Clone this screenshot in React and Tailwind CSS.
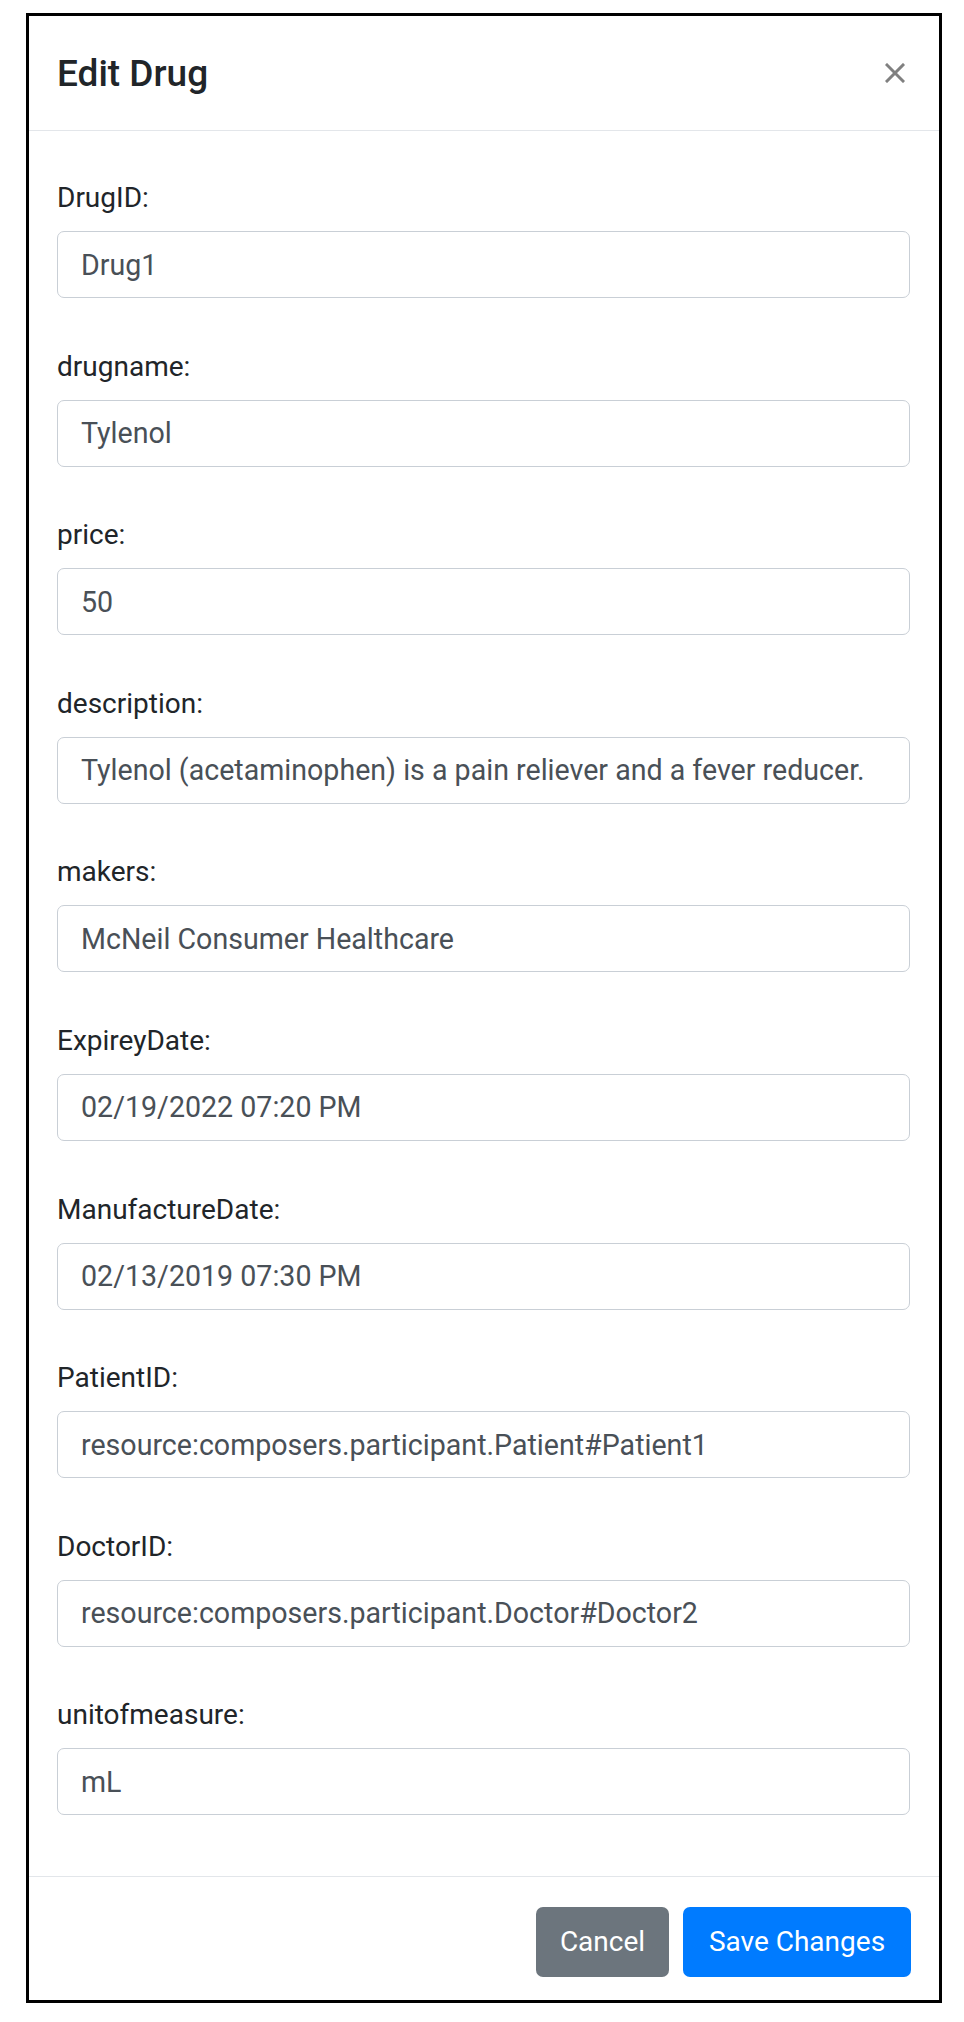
import { useState } from 'react';

const fields = [
    { label: 'DrugID:', value: 'Drug1' },
    { label: 'drugname:', value: 'Tylenol' },
    { label: 'price:', value: '50' },
    { label: 'description:', value: 'Tylenol (acetaminophen) is a pain reliever and a fever reducer.' },
    { label: 'makers:', value: 'McNeil Consumer Healthcare' },
    { label: 'ExpireyDate:', value: '02/19/2022 07:20 PM' },
    { label: 'ManufactureDate:', value: '02/13/2019 07:30 PM' },
    { label: 'PatientID:', value: 'resource:composers.participant.Patient#Patient1' },
    { label: 'DoctorID:', value: 'resource:composers.participant.Doctor#Doctor2' },
    { label: 'unitofmeasure:', value: 'mL' },
];

function EditDrugModal() {
    const [values, setValues] = useState(fields.map((f) => f.value));

    return (
        <div className="ml-[26px] mt-[13px] w-[916px] border-[3px] border-black bg-white font-['Roboto',sans-serif] text-[#212529]">
            {/* Header */}
            <div className="flex h-[115px] items-center justify-between border-b border-[#e3e6ea] pl-[28px] pr-[33px]">
                <h5 className="text-[37px] font-medium leading-none">Edit Drug</h5>
                <button className="flex h-[22px] w-[22px] items-center justify-center text-[#808080]">
                    <svg width="20" height="20" viewBox="0 0 20 20" stroke="currentColor" strokeWidth="3" strokeLinecap="square">
                        <line x1="2" y1="2" x2="18" y2="18" />
                        <line x1="18" y1="2" x2="2" y2="18" />
                    </svg>
                </button>
            </div>

            {/* Body */}
            <div className="pb-[61px] pl-[28px] pr-[29px] pt-[46px]">
                {fields.map((f, i) => (
                    <div key={f.label} className={i < fields.length - 1 ? 'mb-[47.6px]' : ''}>
                        <label className="mb-[12px] block text-[28px] leading-[42px]">{f.label}</label>
                        <input
                            type="text"
                            className="block h-[67px] w-full rounded-[7px] border border-[#c9cfd6] px-[23px] text-[28.6px] text-[#495057] outline-none"
                            value={values[i]}
                            onChange={(e) => {
                                const next = [...values];
                                next[i] = e.target.value;
                                setValues(next);
                            }}
                        />
                    </div>
                ))}
            </div>

            {/* Footer */}
            <div className="flex h-[124px] items-start justify-end gap-[14px] border-t border-[#e3e6ea] pr-[28px] pt-[30px]">
                <button className="h-[70px] w-[133px] rounded-[7px] bg-[#6c757d] text-[28px] text-white">Cancel</button>
                <button className="h-[70px] w-[228px] rounded-[7px] bg-[#007bff] text-[28px] text-white">Save Changes</button>
            </div>
        </div>
    );
}

export default function App() {
    return (
        <div className="min-h-screen bg-white">
            <EditDrugModal />
        </div>
    );
}
